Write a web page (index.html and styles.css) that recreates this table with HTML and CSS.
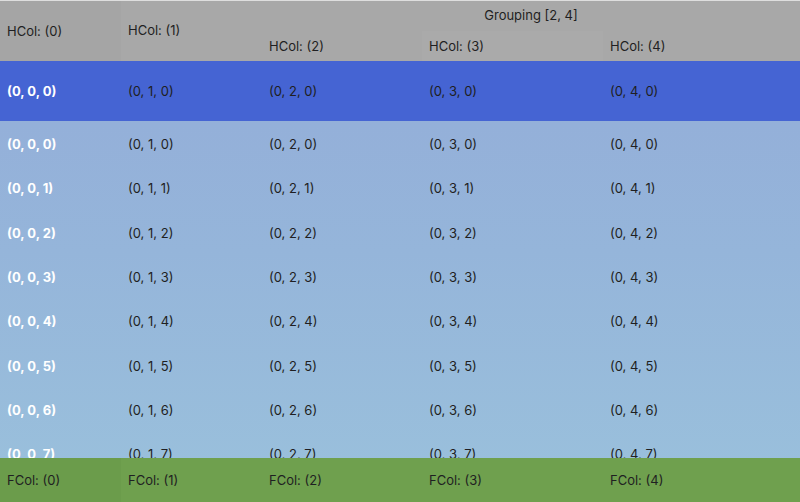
FILE: index.html
```html
<!DOCTYPE html>
<html lang="en">
<head>
  <meta charset="UTF-8" />
  <title>Grid</title>
  <link rel="stylesheet" href="styles.css">
</head>
<body>
  <div class="grid">
    <div class="head">
      <div class="hcell first span2">HCol: (0)</div>
      <div class="hcell span2 up">HCol: (1)</div>
      <div class="hcell group">Grouping [2, 4]</div>
      <div class="hcell">HCol: (2)</div>
      <div class="hcell alt">HCol: (3)</div>
      <div class="hcell">HCol: (4)</div>
    </div>

    <div class="row pinned">
      <div class="cell first">(0, 0, 0)</div>
      <div class="cell">(0, 1, 0)</div>
      <div class="cell">(0, 2, 0)</div>
      <div class="cell">(0, 3, 0)</div>
      <div class="cell">(0, 4, 0)</div>
    </div>

    <div class="rows" id="rows"></div>

    <div class="row foot">
      <div class="cell first">FCol: (0)</div>
      <div class="cell">FCol: (1)</div>
      <div class="cell">FCol: (2)</div>
      <div class="cell">FCol: (3)</div>
      <div class="cell">FCol: (4)</div>
    </div>
  </div>

  <script>
    // build the scrolling body rows
    const rows = document.getElementById('rows');
    for (let r = 0; r < 8; r++) {
      const row = document.createElement('div');
      row.className = 'row';
      for (let c = 0; c < 5; c++) {
        const cell = document.createElement('div');
        cell.className = c === 0 ? 'cell first' : 'cell';
        cell.textContent = `(0, ${c}, ${r})`;
        row.appendChild(cell);
      }
      rows.appendChild(row);
    }
  </script>
</body>
</html>
```

FILE: styles.css
```css
:root {
  --cols: 121px 141px 160px 181px 1fr;
  --text: #1f1f22;
}

body {
  margin: 0;
  font-family: 'Inter', 'Liberation Sans', sans-serif;
  font-size: 13px;
  color: var(--text);
}

.grid {
  width: 800px;
  height: 502px;
  display: flex;
  flex-direction: column;
  overflow: hidden;
  background: linear-gradient(180deg, #93abd8 0%, #95b5da 50%, #9ac1dc 100%);
}

.head {
  display: grid;
  grid-template-columns: var(--cols);
  grid-template-rows: 30px 30px;
  background: #a8a8a8;
  border-top: 1px solid #dedede;
}

.hcell {
  display: flex;
  align-items: center;
  padding-left: 7px;
}

.hcell.span2 {
  grid-row: span 2;
}

.hcell.up {
  padding-bottom: 2px;
}

.hcell.first {
  background: #a5a5a5;
}

.hcell.group {
  grid-column: 3 / 6;
  justify-content: center;
  padding-left: 0;
  padding-bottom: 2px;
}

.hcell.alt {
  background: #aaaaaa;
}

.row {
  display: grid;
  grid-template-columns: var(--cols);
  height: 44px;
  flex-shrink: 0;
}

.rows .row {
  height: 44.3px;
}

.cell {
  display: flex;
  align-items: center;
  padding-left: 7px;
  white-space: nowrap;
}

.cell.first {
  color: #fff;
  font-weight: 700;
}

.pinned {
  height: 60px;
  background: #4564d3;
}

.rows {
  flex: 1;
  overflow: hidden;
  padding-top: 1px;
}

.foot {
  background: #6fa04e;
}

.foot .cell.first {
  color: var(--text);
  font-weight: 400;
  background: #6b9c4b;
}
```
